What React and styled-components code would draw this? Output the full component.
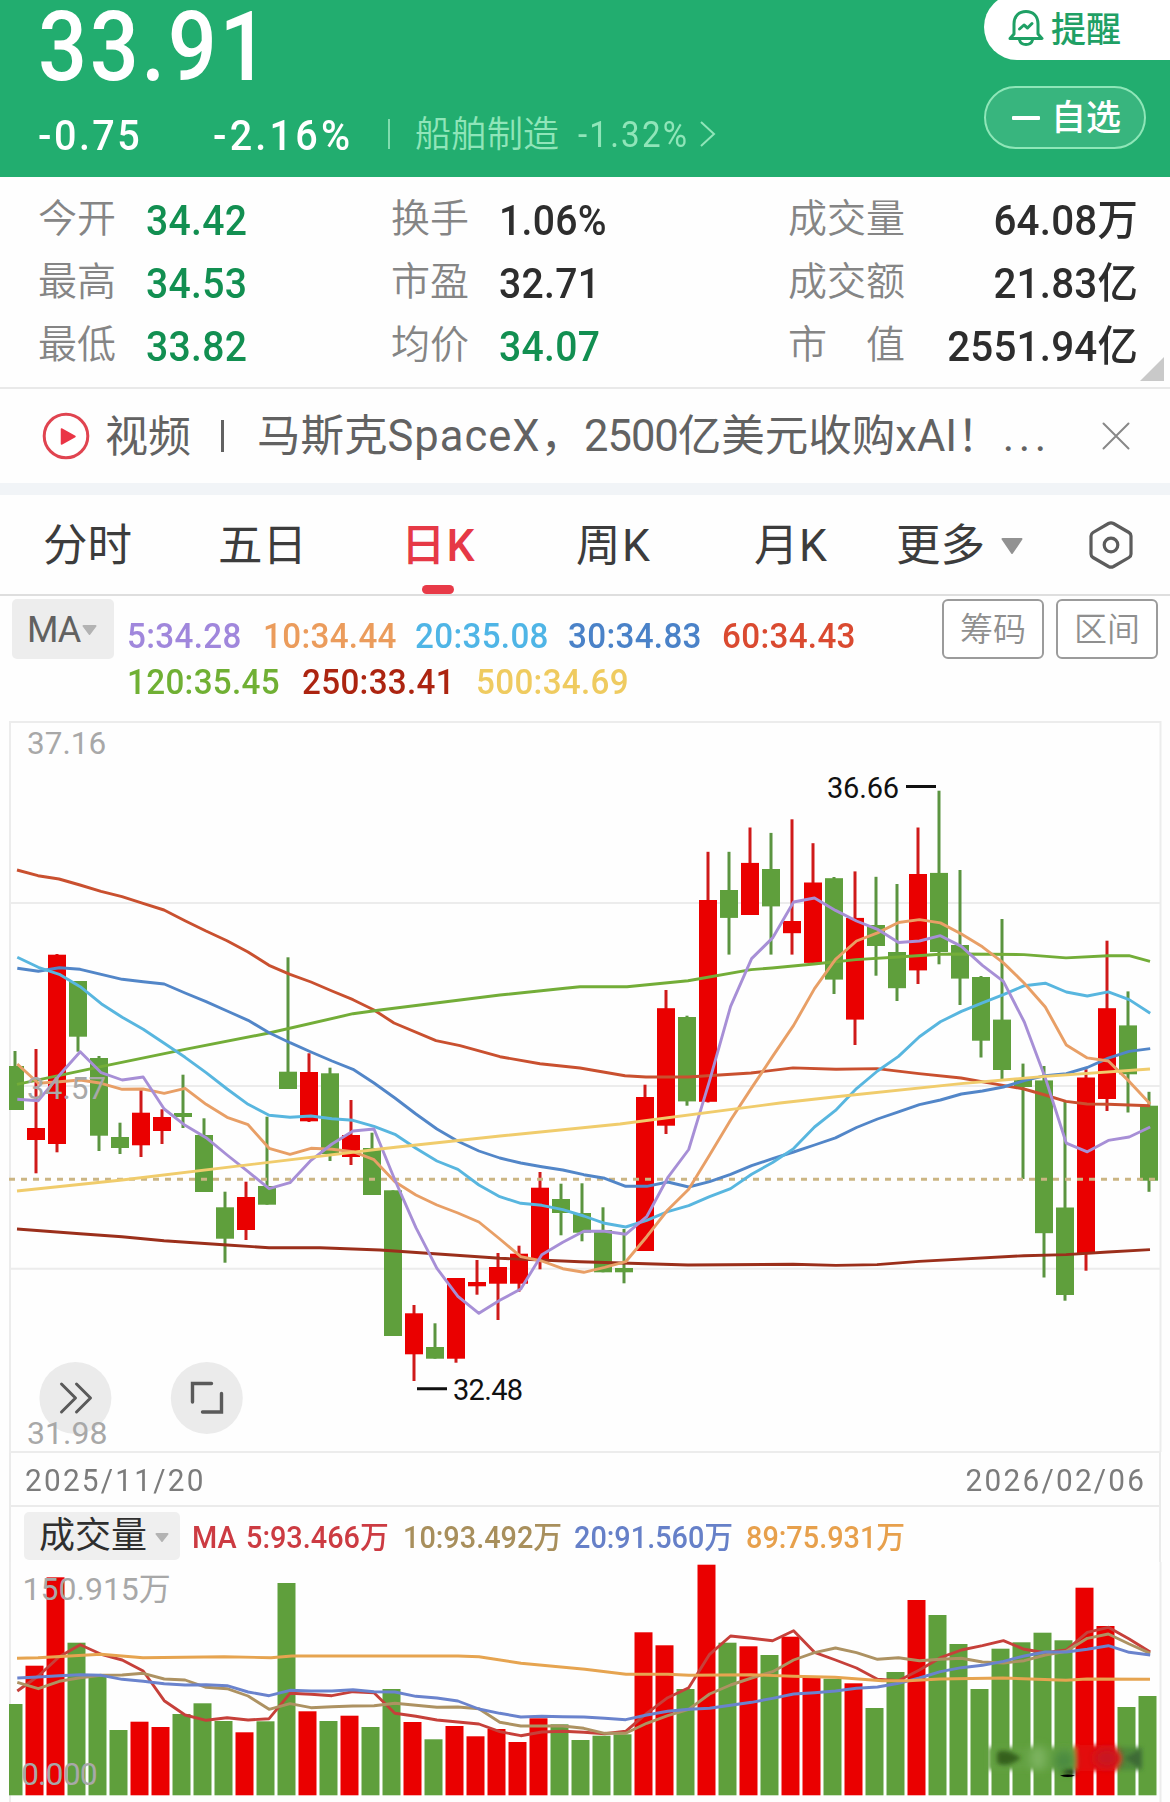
import React from 'react';
import styled, { createGlobalStyle } from 'styled-components';

const FONT = `Roboto, "Noto Sans CJK SC", sans-serif`;
const RED = '#ea0000';
const GREEN = '#5f9f3c';

const GlobalStyle = createGlobalStyle`
  * { box-sizing: border-box; }
  body { margin: 0; background: #fff; font-family: ${FONT}; }
`;

const Page = styled.div`
  width: 1170px;
  height: 1802px;
  overflow: hidden;
  background: #fefefe;
  font-family: ${FONT};
`;

const Label = styled.span`
  display: inline-block;
  font-size: ${p => p.$size}px;
  line-height: ${p => p.$line || p.$size}px;
  font-weight: ${p => p.$weight || 400};
  letter-spacing: ${p => p.$spacing || 0}px;
  color: ${p => p.$color || 'inherit'};
  margin-left: ${p => p.$gap || 0}px;
  padding-top: ${p => p.$drop || 0}px;
  white-space: pre;
`;

const Condensed = styled(Label)`
  transform: scaleX(${p => p.$stretch || 0.92});
  transform-origin: ${p => (p.$end ? 'right' : 'left')} center;
`;

/* ---------- quote header ---------- */

const Header = styled.header`
  display: flex;
  justify-content: space-between;
  height: 177px;
  background: #22ad6f;
  color: #fff;
`;

const Quote = styled.div`
  display: flex;
  flex-direction: column;
  padding-left: 38px;
`;

const ChangeRow = styled.div`
  display: grid;
  grid-template-columns: 175px 175px 27px 163px 122px 20px;
  align-items: center;
  height: 84px;
`;

const Divider = styled.i`
  width: 2px;
  height: 30px;
  margin-bottom: 3px;
  background: #7fdcae;
`;

const HeaderActions = styled.div`
  display: flex;
  flex-direction: column;
  width: 186px;
  gap: 26px;
`;

const AlertButton = styled.button`
  display: flex;
  align-items: center;
  height: 66px;
  margin-top: -6px;
  padding: 2px 0 0 24px;
  border: 0;
  border-radius: 33px 0 0 33px;
  background: #fff;
  color: #1fa065;
  font-family: inherit;
`;

const WatchButton = styled.button`
  display: flex;
  align-items: center;
  width: 162px;
  height: 63px;
  padding: 0 0 0 26px;
  border: 2px solid #8ee6b8;
  border-radius: 32px;
  background: #38b57e;
  color: #fff;
  font-family: inherit;
`;

const Minus = styled.i`
  width: 28px;
  height: 4px;
  border-radius: 1px;
  background: #fff;
`;

/* ---------- statistics ---------- */

const Stats = styled.section`
  position: relative;
  display: grid;
  grid-template-columns: 353px 397px 350px;
  grid-auto-rows: 63px;
  height: 212px;
  padding: 12px 0 0 38px;
  border-bottom: 2px solid #e9e9e9;
`;

const Stat = styled.div`
  display: grid;
  grid-template-columns: ${p => (p.$wide ? '116px 1fr' : '108px 1fr')};
  align-items: center;
`;

const StatName = styled.span`
  padding-bottom: 3px;
  font-size: 39px;
  line-height: 44px;
  font-weight: 350;
  color: #858585;
  white-space: pre;
`;

const StatValue = styled(Condensed)`
  text-align: ${p => (p.$end ? 'right' : 'left')};
  color: ${p => (p.$green ? '#128f51' : '#2d2d2d')};
`;

const Corner = styled.i`
  position: absolute;
  right: 6px;
  bottom: 6px;
  border-left: 24px solid transparent;
  border-bottom: 24px solid #c9c9c9;
`;

/* ---------- news strip ---------- */

const News = styled.section`
  display: flex;
  align-items: center;
  height: 94px;
  padding: 0 0 1px 42px;
  color: #626262;
`;

const NewsTitle = styled.div`
  display: flex;
  align-items: center;
  flex: none;
  width: 878px;
  padding-left: 33px;
`;

const NewsBar = styled.i`
  width: 3px;
  height: 32px;
  margin-left: 30px;
  background: #626262;
`;

const Band = styled.div`
  height: 12px;
  background: #f1f4f7;
`;

/* ---------- period tabs ---------- */

const Tabs = styled.nav`
  display: grid;
  grid-template-columns: 175px 183px 175px 178px 142px 193px 44px;
  height: 101px;
  padding-left: 43px;
  border-bottom: 2px solid #dedede;
`;

const Tab = styled.div`
  display: flex;
  position: relative;
  align-items: center;
  padding-top: ${p => (p.$icon ? 0 : 2)}px;
  font-size: 44.5px;
  line-height: 56px;
  font-weight: ${p => (p.$active ? 500 : 400)};
  letter-spacing: ${p => p.$spacing || 0}px;
  color: ${p => (p.$active ? '#e63946' : '#3c3c3c')};
  white-space: nowrap;
`;

const Underline = styled.i`
  position: absolute;
  left: 21px;
  bottom: 0;
  width: 32px;
  height: 9px;
  border-radius: 5px;
  background: #e83a48;
`;

/* ---------- indicator legend ---------- */

const Legend = styled.section`
  display: grid;
  grid-template-columns: 102px 804px 102px 102px;
  column-gap: 12px;
  align-items: start;
  height: 126px;
  padding: 3px 0 0 12px;
`;

const MaPicker = styled.div`
  display: flex;
  align-items: center;
  height: 60px;
  padding: 1px 0 0 15px;
  border-radius: 5px;
  background: #ededed;
  color: #616161;
`;

const MaValues = styled.div`
  display: grid;
  grid-template-columns: 136px 152px 153px 154px 140px;
  padding: 14px 0 0 1px;
`;

const MaValuesSecond = styled(MaValues)`
  grid-template-columns: 175px 174px 174px;
  padding-top: 0;
`;

const OutlineButton = styled.button`
  height: 60px;
  padding: 1px 0 0;
  border: 2px solid #9b9b9b;
  border-radius: 6px;
  background: #fff;
  color: #8f8f8f;
  font: 350 33px/54px ${FONT};
`;

/* ---------- charts ---------- */

const ChartSvg = styled.svg`
  display: block;
  overflow: visible;
  width: 1170px;
  height: ${p => p.$height}px;
`;

const DateRow = styled.div`
  display: flex;
  justify-content: space-between;
  align-items: center;
  height: 55px;
  margin: 0 9px;
  padding: 3px 13px 0 14px;
  border: 2px solid #ebebeb;
  border-top: 0;
  color: #7c7c7c;
`;

const VolumeHeader = styled.div`
  display: flex;
  align-items: center;
  height: 55px;
  margin: 0 9px;
  padding: 2px 0 0 13px;
  border: solid #ebebeb;
  border-width: 0 2px;
`;

const VolumePicker = styled.div`
  display: flex;
  align-items: center;
  width: 156px;
  height: 48px;
  padding: 1px 0 0 15px;
  border-radius: 5px;
  background: #efefef;
  color: #2f2f2f;
`;

const VolumeValues = styled.div`
  display: grid;
  grid-template-columns: 54px 157px 171px 172px 160px;
  padding: 4px 0 0 12px;
`;

const Caret = ({ w, h, color, gap, drop = 0 }) => (
  <svg width={w} height={h + drop} style={{ marginLeft: gap }}>
    <path
      d={`M1.5 ${drop + 1} H${w - 1.5} L${w / 2} ${drop + h - 1} Z`}
      fill={color} stroke={color} strokeWidth="2" strokeLinejoin="round"
    />
  </svg>
);

const BellIcon = () => (
  <svg width="36" height="38" viewBox="0 0 36 38" fill="none" stroke="#1fa065" strokeWidth="3" strokeLinecap="round" strokeLinejoin="round">
    <path d="M6 25 V15 C6 7 11 2.500 18 2.500 S30 7 30 15 V25 L34 29.500 H2 Z" />
    <path d="M11.500 31 C13 37 23 37 24.500 31" />
    <path d="M11.500 20 L16 16 L19.500 19 L24 14.500" />
  </svg>
);

const PlayIcon = () => (
  <svg width="48" height="48" viewBox="0 0 48 48">
    <circle cx="24" cy="24" r="21.800" fill="#fff" stroke="#e04450" strokeWidth="3" />
    <path d="M19.500 17 L33 24.500 L19.500 32 Z" fill="#ea3546" stroke="#ea3546" strokeWidth="1.500" strokeLinejoin="round" />
  </svg>
);

const CloseIcon = () => (
  <svg width="28" height="28" viewBox="0 0 28 28" stroke="#888" strokeWidth="2" strokeLinecap="round">
    <path d="M1.500 1.500 L26.500 26.500 M26.500 1.500 L1.500 26.500" />
  </svg>
);

const HexIcon = () => (
  <svg width="44" height="48" viewBox="0 0 44 48" fill="none" stroke="#5c5c5c" strokeWidth="3.200" strokeLinejoin="round">
    <path d="M19.500 2.500 Q22 1.200 24.500 2.500 L40 11.500 Q42 12.700 42 15 V33 Q42 35.300 40 36.500 L24.500 45.500 Q22 46.800 19.500 45.500 L4 36.500 Q2 35.300 2 33 V15 Q2 12.700 4 11.500 Z" />
    <circle cx="22" cy="24" r="6.800" />
  </svg>
);

/* [rising, high, body top, body bottom, low] */
const candles = [
  [0, 1051, 1066, 1110, 1110], [1, 1049, 1128, 1140, 1173.3], [1, 954, 954.7, 1144, 1152.3], [0, 981, 981, 1036.7, 1051.7],
  [0, 1056, 1058, 1135.7, 1151], [0, 1122.7, 1137, 1148, 1154], [1, 1090, 1112.7, 1145.3, 1157], [1, 1109.3, 1117, 1131, 1144],
  [0, 1074.7, 1113, 1117, 1128], [0, 1118.3, 1135, 1192, 1192], [0, 1191.7, 1207.3, 1238.7, 1262.7], [1, 1181.7, 1197, 1230, 1240],
  [0, 1116.7, 1186, 1204.7, 1204.7], [0, 957.3, 1071.7, 1089, 1089], [1, 1053.3, 1072, 1121.3, 1122], [0, 1067.7, 1073.3, 1154, 1161],
  [1, 1100, 1135, 1157, 1165], [0, 1132.7, 1148, 1195, 1195], [0, 1190.3, 1190.3, 1336, 1336], [1, 1305, 1313.3, 1354.3, 1381],
  [0, 1323.3, 1347, 1358.7, 1358.7], [1, 1278, 1278, 1358.7, 1362.7], [1, 1260, 1282, 1286.3, 1294.7], [1, 1253, 1267, 1283.7, 1320],
  [1, 1245.7, 1253.7, 1283.7, 1291.7], [1, 1172, 1187.7, 1261, 1269.3], [0, 1183.7, 1199, 1213, 1235.3], [0, 1183.3, 1213, 1232.7, 1241.3],
  [0, 1207.3, 1230, 1272.3, 1272.3], [0, 1229, 1268, 1272.3, 1283.3], [1, 1084.7, 1097, 1251, 1251], [1, 990, 1008.2, 1125.7, 1134],
  [0, 1015.7, 1017, 1101.4, 1105.7], [1, 851.8, 900, 1101.8, 1102.5], [0, 851.8, 890, 917.9, 954.6], [1, 827.5, 862.9, 915, 915],
  [0, 832.9, 869, 906.4, 954.6], [1, 819.3, 921, 933.2, 954.6], [1, 843.2, 882.5, 962.9, 962.9], [0, 877, 878.2, 979.6, 994],
  [1, 871.4, 917.9, 1019.6, 1045], [0, 876.8, 925, 946, 975.7], [0, 884, 952, 988.2, 1001], [1, 827.5, 874, 970.4, 984],
  [0, 790.7, 872.9, 952, 964.3], [0, 870, 945, 978.6, 1005], [0, 976, 977, 1040.7, 1057.5], [0, 919, 1019.6, 1070, 1079],
  [0, 1063.6, 1079, 1087, 1179], [0, 1066, 1080.4, 1233.2, 1277.5], [0, 1102, 1207.5, 1295, 1300.7], [1, 1069.3, 1077.5, 1253, 1270.7],
  [1, 940.7, 1008.2, 1099, 1111], [0, 991.4, 1025.4, 1074.3, 1112.5], [0, 1091.8, 1105.7, 1180.7, 1191.8],
];

const volumes = [
  1704, 1665.7, 1577.3, 1642.7, 1676.7, 1730, 1721.7, 1727, 1714, 1703.3, 1721, 1732.3, 1721.3, 1583, 1711.3, 1721, 1715.7, 1727,
  1689, 1722, 1739.3, 1726, 1736.3, 1729, 1742, 1718.3, 1724.3, 1740, 1735.7, 1734.3, 1632.3, 1645.3, 1689, 1564.7, 1642.7, 1646.3,
  1655, 1636.7, 1677.3, 1678.7, 1683.3, 1708, 1672, 1600, 1615, 1644, 1689, 1648.7, 1642.3, 1632.7, 1640.3, 1587.7, 1626, 1707, 1696,
];

const daily = ys => ys.map((y, i) => `${(17.3 + 20.98 * i).toFixed(1)},${y}`).join(' ');

const priceLines = [
  ['#c9502f', '17,870 38,875.7 59,879 80,885 101,891.3 122,896.7 143,903.3 164,910 185,920.7 206,931 227,940.7 248,952 269,965.3 290,974.3 311,982 332,991 353,999.7 374,1010 394,1023 436,1040.7 460,1045.7 500,1056.7 540,1063.7 580,1068 625,1075.7 646,1077 688,1077 751,1073 793,1067.9 836,1069.3 877,1068.6 919,1073.6 961,1078 1003,1085.4 1024,1089 1045,1095 1066,1101.4 1087,1104 1108,1104.3 1150,1105.7'],
  ['#9b2f1b', '17,1229 80,1233.7 122,1236.7 164,1240.7 227,1245 269,1247.7 320,1247.7 380,1250 500,1258.3 580,1261.7 688,1265 793,1264.3 836,1265.4 877,1264.6 919,1261.4 1024,1255.7 1066,1254.6 1108,1252 1150,1249.6'],
  ['#73ad38', '17,1084.3 101,1066.7 185,1049.3 269,1033 353,1013.7 380,1010 420,1005 460,1000 500,995 565,988.3 580,986.7 627,986.7 688,980.7 751,969.6 772,968 814,964 856,959.6 898,957 940,954.3 961,954 1024,954.6 1066,957.9 1108,955.7 1129,955.7 1150,961.4'],
  ['#5286c8', daily([968.3, 971.3, 967.7, 969.3, 974.3, 979.3, 981.7, 984, 993, 1001.7, 1011, 1020.3, 1032.7, 1042.7, 1052, 1061, 1069.3, 1083, 1098, 1114, 1129, 1141.3, 1151, 1158, 1163, 1166.7, 1170, 1174.7, 1178.3, 1186.3, 1186.3, 1182, 1187, 1181.7, 1174.3, 1165.7, 1158.6, 1152, 1145, 1137.9, 1127.5, 1119, 1111.8, 1104.6, 1100, 1094, 1091, 1087, 1080.7, 1075.7, 1073.6, 1067.5, 1058.2, 1051.4, 1048.6])],
  ['#58b6df', daily([957.3, 967.3, 974.3, 986.7, 1003.7, 1017.3, 1029.3, 1043.3, 1057.3, 1072.7, 1089, 1104.3, 1115.3, 1117.3, 1116, 1118.7, 1120.3, 1126.3, 1134.3, 1148.3, 1161, 1169.3, 1185, 1196.7, 1203.3, 1205.3, 1209.7, 1216, 1223.3, 1227, 1220.3, 1211.7, 1205.7, 1196.7, 1188.6, 1174.3, 1162.5, 1148.6, 1127, 1110.4, 1088.6, 1071, 1056.4, 1036.8, 1021.8, 1011.4, 1002.9, 994.6, 985.7, 983.2, 992, 996, 991.8, 999.6, 1013.2])],
  ['#e89f66', daily([1064, 1083.3, 1081.7, 1080, 1083.3, 1089.3, 1089, 1093.3, 1088.3, 1104.3, 1117.3, 1124.7, 1148.3, 1154.3, 1148.3, 1149.3, 1151.7, 1159.7, 1181.7, 1195, 1205, 1213, 1222, 1239, 1256.7, 1261, 1268.7, 1272.3, 1267.3, 1261.7, 1236.7, 1210, 1189.3, 1155, 1120, 1087.9, 1056.4, 1025.4, 988.6, 959.3, 941, 932.9, 922.5, 919.6, 922.9, 934, 946.8, 962.9, 983.2, 1007, 1045, 1057.9, 1061, 1081.4, 1104])],
  ['#a78fd6', daily([1099.3, 1100.7, 1075.3, 1051.7, 1072.7, 1080, 1077, 1109, 1125.3, 1137.7, 1155, 1171.7, 1188.7, 1182.7, 1160.3, 1144, 1131, 1129, 1180, 1227.7, 1268.3, 1296.3, 1313.3, 1300.3, 1289, 1254.7, 1242.3, 1231.3, 1231.3, 1234.3, 1216.7, 1177.7, 1149.5, 1080.7, 1006.4, 958.6, 937.9, 902, 898, 910.4, 921, 929.3, 942.5, 941, 935.7, 946.4, 965.4, 981.4, 1022, 1077.9, 1143.2, 1151.8, 1140.4, 1137, 1127])],
  ['#f0cc6c', '17,1191 122,1180 380,1149 400,1146.7 500,1136 620,1124 780,1103 836,1096.8 961,1083.6 1045,1076.4 1150,1069'],
];

const volumeLines = [
  ['#c6403a', daily([1691, 1676, 1656.7, 1644.7, 1654.3, 1660, 1671, 1700.7, 1715, 1720.3, 1717.7, 1720, 1718.7, 1693.3, 1694.3, 1695.7, 1691.7, 1692.7, 1713.3, 1716.3, 1720, 1722, 1724, 1731.7, 1735.7, 1732, 1731.3, 1732.3, 1733.7, 1731.3, 1713.3, 1697.7, 1687.7, 1654.3, 1636, 1638.3, 1640.7, 1630.7, 1652.3, 1660, 1668, 1679.3, 1680.7, 1670, 1657.7, 1650, 1645.7, 1640.7, 1649.3, 1652.7, 1650, 1632.3, 1627.3, 1639, 1652])],
  ['#ad9262', daily([1682.3, 1688.7, 1681.3, 1677.7, 1675.3, 1675, 1673.3, 1679, 1680, 1687.3, 1688.7, 1696, 1709.3, 1703.7, 1707.7, 1706.7, 1706, 1705.7, 1703.3, 1705.3, 1707.3, 1707, 1708.7, 1722.3, 1726, 1726, 1726, 1728.3, 1733.3, 1733.3, 1723.3, 1715.7, 1709.3, 1694, 1685, 1678, 1671.7, 1660, 1652.7, 1648, 1652.7, 1659.3, 1657.7, 1660.7, 1659.3, 1658.3, 1662, 1663, 1660.7, 1655, 1651.3, 1638.3, 1634, 1644, 1653.3])],
  ['#6a83cd', daily([1678, 1677, 1675.7, 1674.7, 1675.3, 1679.3, 1681.3, 1683.7, 1685, 1684.7, 1685.7, 1692, 1695.7, 1690.3, 1691, 1691, 1689.7, 1691.7, 1692, 1696.3, 1698, 1701, 1709, 1713.3, 1717, 1716.3, 1716.7, 1717, 1718.3, 1719.7, 1715, 1711.3, 1709.3, 1708.3, 1705.3, 1702.3, 1698.3, 1694, 1692.7, 1691, 1688.3, 1687, 1683.3, 1678, 1671.7, 1667.7, 1665.3, 1661.3, 1656, 1652, 1652, 1649.3, 1645.7, 1652.3, 1655])],
  ['#e6a450', '17,1658.3 38,1657.7 101,1654.3 143,1657.7 224,1656.7 271,1657.7 292,1656 458,1656 479,1656.7 521,1663.3 585,1669.3 626,1674.3 668,1674.3 689,1675.3 751,1674.7 793,1676.3 835,1677.3 882,1680.7 908,1680.7 940,1679 1003,1678 1066,1680.3 1087,1679 1150,1679.3'],
];

const Lines = ({ lines }) => lines.map(([color, points]) => (
  <polyline key={color} points={points} fill="none" stroke={color} strokeWidth="2.900" strokeLinejoin="round" />
));

const ScaleText = styled.text`
  font-family: ${FONT};
  font-size: ${p => p.$size}px;
  letter-spacing: ${p => p.$spacing || 0}px;
  fill: ${p => p.$fill || '#a8a8a8'};
`;

const PriceChart = () => (
  <ChartSvg $height={730} viewBox="0 722 1170 730">
    <path d="M9 722 H1161 M9 903 H1161 M9 1086 H1161 M9 1268.700 H1161 M9 1452 H1161 M10 721 V1452 M1160.500 721 V1452" stroke="#ececec" strokeWidth="2" fill="none" />
    {candles.map(([up, high, top, bottom, low], i) => {
      const x = 15 + 21 * i;
      const left = Math.max(9, x - 9);
      const fill = up ? RED : GREEN;
      return (
        <g key={i} fill={fill}>
          <rect x={x - 1.5} y={high} width="3" height={low - high} fill={up ? '#cf1a1a' : '#5b9440'} />
          <rect x={left} y={top} width={x + 9 - left} height={bottom - top} />
        </g>
      );
    })}
    <path d="M9 1179.300 H1160" stroke="#cbb583" strokeWidth="3" strokeDasharray="6 6" />
    <Lines lines={priceLines} />
    <ScaleText x="27" y="753.500" $size={31.5}>37.16</ScaleText>
    <ScaleText x="27" y="1098.500" $size={31.5}>34.57</ScaleText>
    <circle cx="75.400" cy="1398" r="36" fill="#ebebeb" />
    <circle cx="206.800" cy="1398" r="36" fill="#ebebeb" />
    <path d="M61.500 1384 L75.500 1398 L61.500 1412 M76.500 1384 L90.500 1398 L76.500 1412" fill="none" stroke="#5a5a5a" strokeWidth="3" strokeLinecap="round" strokeLinejoin="round" />
    <path d="M192.500 1402 V1383.500 H211.500 M221.500 1393.500 V1412 H202.500" fill="none" stroke="#5a5a5a" strokeWidth="3.400" strokeLinecap="round" />
    <ScaleText x="27" y="1443.500" $size={32}>31.98</ScaleText>
    <path d="M906 786.500 H936 M417 1388.700 H447" stroke="#111" strokeWidth="3" />
    <ScaleText x="827" y="797.500" $size={29} $spacing={-0.2} $fill="#111">36.66</ScaleText>
    <ScaleText x="453" y="1400" $size={29} $spacing={-0.7} $fill="#111">32.48</ScaleText>
  </ChartSvg>
);

const VolumeChart = () => (
  <ChartSvg $height={240} viewBox="0 1562 1170 240">
    <defs>
      <filter id="smudge" x="-40%" y="-80%" width="180%" height="260%"><feGaussianBlur stdDeviation="4" /></filter>
      <filter id="soft" x="-40%" y="-60%" width="180%" height="220%"><feGaussianBlur stdDeviation="2" /></filter>
    </defs>
    <path d="M10 1562 V1802 M1160.500 1562 V1802" stroke="#ececec" strokeWidth="2" />
    {volumes.map((y, i) => {
      const x = 13.5 + 21 * i;
      const left = Math.max(9, x - 9);
      return <rect key={i} x={left} y={y} width={x + 9 - left} height={1795.3 - y} fill={candles[i][0] ? RED : GREEN} />;
    })}
    <g filter="url(#soft)">
      <rect x="988" y="1747" width="88" height="23" fill="#63a143" />
      <rect x="1118" y="1747" width="24" height="23" fill="#4f8a3a" />
      <path d="M1075 1745 H1114 L1121 1758 L1116 1771 H1075 Z" fill="#e30a0c" />
    </g>
    <g filter="url(#smudge)">
      <ellipse cx="1038" cy="1758" rx="8" ry="12" fill="#7bb35f" />
      <ellipse cx="1064" cy="1761" rx="10" ry="11" fill="#4b8b41" />
      <ellipse cx="1107" cy="1758" rx="13" ry="10" fill="#c81920" />
    </g>
    <g filter="url(#soft)">
      <path d="M997 1752 Q1006 1747 1021 1758 Q1006 1769 997 1763 Z" fill="#34601f" />
      <path d="M1124 1758 L1141 1749 V1769 Z" fill="#3d6a35" />
      <path d="M1061 1773 Q1068 1769 1075 1770 V1775 Z" fill="#1c3312" />
    </g>
    <path d="M1060 1775.500 Q1068 1773.500 1075 1775.500 Q1068 1778.500 1060 1775.500 Z" fill="#000" />
    <Lines lines={volumeLines} />
    <ScaleText x="22.500" y="1599.500" $size={32}>150.915万</ScaleText>
    <ScaleText x="21" y="1784.500" $size={32} $spacing={-0.9}>0.000</ScaleText>
  </ChartSvg>
);

const stats = [
  { name: '今开', value: '34.42', green: true }, { name: '换手', value: '1.06%' }, { name: '成交量', value: '64.08万', wide: true },
  { name: '最高', value: '34.53', green: true }, { name: '市盈', value: '32.71' }, { name: '成交额', value: '21.83亿', wide: true },
  { name: '最低', value: '33.82', green: true }, { name: '均价', value: '34.07', green: true }, { name: '市　值', value: '2551.94亿', wide: true },
];

const Ma = ({ color, children }) => (
  <Condensed $size={35.5} $line={46} $weight={500} $spacing={0.35} $stretch={0.935} $color={color}>{children}</Condensed>
);

const Vol = ({ color, children }) => (
  <Condensed $size={30.5} $line={40} $weight={500} $spacing={0} $stretch={0.945} $color={color}>{children}</Condensed>
);

export default function App() {
  return (
    <Page>
      <GlobalStyle />
      <Header>
        <Quote>
          <Condensed $size={96} $line={91} $drop={2} $weight={500} $spacing={2.8} $stretch={0.9}>33.91</Condensed>
          <ChangeRow>
            <Condensed $size={43} $weight={500} $spacing={2.7}>-0.75</Condensed>
            <Condensed $size={43} $weight={500} $spacing={3.5}>-2.16%</Condensed>
            <Divider />
            <Label $size={36} $weight={350} $color="#90e5b9">船舶制造</Label>
            <Condensed $size={36} $spacing={2.4} $color="#90e5b9">-1.32%</Condensed>
            <svg width="18" height="28" viewBox="0 0 18 28" fill="none" stroke="#90e5b9" strokeWidth="2">
              <path d="M1 1 L14 13 L1 25" />
            </svg>
          </ChangeRow>
        </Quote>
        <HeaderActions>
          <AlertButton>
            <BellIcon />
            <Label $size={35} $line={48} $weight={500} $gap={7} $drop={5}>提醒</Label>
          </AlertButton>
          <WatchButton>
            <Minus />
            <Label $size={35} $line={48} $weight={500} $gap={11} $drop={3}>自选</Label>
          </WatchButton>
        </HeaderActions>
      </Header>

      <Stats>
        {stats.map(s => (
          <Stat key={s.name} $wide={s.wide}>
            <StatName>{s.name}</StatName>
            <StatValue
              $size={42.5} $line={48} $weight={500} $green={s.green}
              $end={s.wide} $stretch={s.wide ? 0.95 : 0.92} $spacing={s.wide ? 0.2 : 0.3}
            >
              {s.value}
            </StatValue>
          </Stat>
        ))}
        <Corner />
      </Stats>

      <News>
        <PlayIcon />
        <Label $size={43} $line={60} $gap={15} $drop={3}>视频</Label>
        <NewsBar />
        <NewsTitle>
          <Label $size={43.5} $line={60} $drop={3}>马斯克</Label>
          <Label $size={43.5} $line={60} $drop={3} $spacing={1}>SpaceX</Label>
          <Label $size={43.5} $line={60} $drop={3}>，</Label>
          <Label $size={43.5} $line={60} $drop={3} $spacing={-1}>2500</Label>
          <Label $size={43.5} $line={60} $drop={3}>亿美元收购xAI！</Label>
          <Label $size={43.5} $line={60} $drop={3} $gap={2} $spacing={4.6}>...</Label>
        </NewsTitle>
        <CloseIcon />
      </News>
      <Band />

      <Tabs>
        <Tab>分时</Tab>
        <Tab>五日</Tab>
        <Tab $active $spacing={1}>日K<Underline /></Tab>
        <Tab $spacing={1.5}>周K</Tab>
        <Tab $spacing={0.5}>月K</Tab>
        <Tab>更多<Caret w={22} h={16} color="#929292" gap={16} /></Tab>
        <Tab $icon><HexIcon /></Tab>
      </Tabs>

      <Legend>
        <MaPicker>
          <Label $size={36} $line={44} $spacing={-1}>MA</Label>
          <Caret w={15} h={10} color="#b3b3b3" gap={2} />
        </MaPicker>
        <div>
          <MaValues>
            <Ma color="#a087dc">5:34.28</Ma>
            <Ma color="#eb9c5c">10:34.44</Ma>
            <Ma color="#4fb5e6">20:35.08</Ma>
            <Ma color="#4a82c8">30:34.83</Ma>
            <Ma color="#da4a30">60:34.43</Ma>
          </MaValues>
          <MaValuesSecond>
            <Ma color="#70b034">120:35.45</Ma>
            <Ma color="#ac2410">250:33.41</Ma>
            <Ma color="#efcb60">500:34.69</Ma>
          </MaValuesSecond>
        </div>
        <OutlineButton>筹码</OutlineButton>
        <OutlineButton>区间</OutlineButton>
      </Legend>

      <PriceChart />
      <DateRow>
        <Condensed $size={32} $spacing={2.4} $stretch={0.93}>2025/11/20</Condensed>
        <Condensed $size={32} $spacing={2.4} $stretch={0.93} $end>2026/02/06</Condensed>
      </DateRow>
      <VolumeHeader>
        <VolumePicker>
          <Label $size={36} $line={46}>成交量</Label>
          <Caret w={14} h={9} color="#b3b3b3" gap={8} drop={2} />
        </VolumePicker>
        <VolumeValues>
          <Vol color="#cc3b42">MA</Vol>
          <Vol color="#cc3b42">5:93.466万</Vol>
          <Vol color="#a88f5c">10:93.492万</Vol>
          <Vol color="#6680c8">20:91.560万</Vol>
          <Vol color="#e7a04c">89:75.931万</Vol>
        </VolumeValues>
      </VolumeHeader>
      <VolumeChart />
    </Page>
  );
}
